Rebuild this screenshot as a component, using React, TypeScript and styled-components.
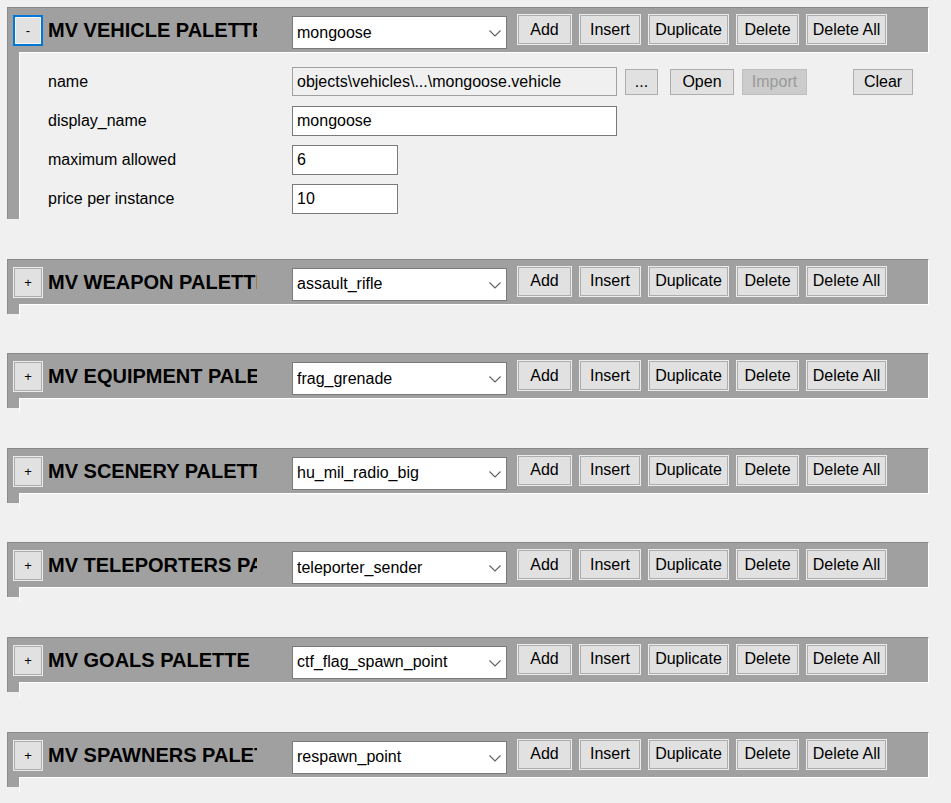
import React from "react";
import styled, { createGlobalStyle } from "styled-components";

const Global = createGlobalStyle`
  html, body { margin: 0; padding: 0; background: #f0f0f0; }
  body { font-family: "Liberation Sans", Arial, sans-serif; font-size: 16px; color: #000; }
  * { box-sizing: border-box; }
`;

const Page = styled.div`
  width: 951px;
  height: 803px;
  overflow: hidden;
  padding: 7px 0 0 7px;
  display: flex;
  flex-direction: column;
  gap: 39.6px;
  background: #f0f0f0;
`;

const Section = styled.div`
  width: 922px;
  display: flex;
  flex-direction: column;
`;

const Header = styled.div`
  height: 45px;
  background: #a0a0a0;
  border-top: 1px solid #888888;
  border-left: 1px solid #8c8c8c;
  border-right: 1px solid #ffffff;
  display: flex;
  align-items: flex-start;
  padding-left: 5px;
`;

const Toggle = styled.div<{ $focused?: boolean }>`
  width: 30px;
  height: 31px;
  margin-top: 7px;
  flex: none;
  background: #e1e1e1;
  border: ${(p) => (p.$focused ? "2px solid #0078d7" : "1px solid #ececec")};
  box-shadow: ${(p) => (p.$focused ? "inset 0 0 0 1px #f4f4f4" : "inset 0 0 0 1px #adadad")};
  display: flex;
  align-items: center;
  justify-content: center;
  font-size: 13px;
  line-height: 1;
  color: #000;
`;

const Title = styled.div`
  width: 209px;
  height: 44px;
  margin-left: 5px;
  flex: none;
  overflow: hidden;
  white-space: nowrap;
  font-weight: bold;
  font-size: 20px;
  line-height: 44px;
  color: #000;
`;

const Combo = styled.div`
  width: 215px;
  height: 33px;
  margin-top: 8px;
  margin-left: 35px;
  flex: none;
  background: #ffffff;
  border: 1px solid #7a7a7a;
  display: flex;
  align-items: center;
  padding: 0 5px 0 4px;
  font-size: 16px;
`;

const ComboText = styled.span`
  flex: 1;
  white-space: nowrap;
  overflow: hidden;
`;

const Chevron = styled.svg`
  width: 12px;
  height: 7px;
  flex: none;
  margin-top: 2px;
`;

const HeaderButtons = styled.div`
  display: flex;
  gap: 7px;
  margin-left: 10px;
  margin-top: 6px;
`;

const HeaderButton = styled.div<{ $w: number }>`
  width: ${(p) => p.$w}px;
  height: 31px;
  background: #e1e1e1;
  border: 1px solid #ececec;
  box-shadow: inset 0 0 0 1px #adadad;
  display: flex;
  align-items: center;
  justify-content: center;
  font-size: 16px;
  white-space: nowrap;
`;

const Body = styled.div<{ $h: number }>`
  display: flex;
  height: ${(p) => p.$h}px;
`;

const Strip = styled.div`
  width: 12px;
  flex: none;
  background: #a0a0a0;
  border-left: 1px solid #8c8c8c;
`;

const Content = styled.div`
  flex: 1;
  background: #f0f0f0;
  border-top: 1px solid #ffffff;
  border-left: 1px solid #ffffff;
  padding: 14px 0 0 27px;
  display: flex;
  flex-direction: column;
  gap: 10px;
`;

const Row = styled.div`
  display: flex;
  align-items: center;
  height: 29px;
`;

const Label = styled.div`
  width: 245px;
  flex: none;
  font-size: 16px;
  white-space: nowrap;
  padding-left: 1px;
`;

const Field = styled.div<{ $w: number; $readOnly?: boolean }>`
  width: ${(p) => p.$w}px;
  height: ${(p) => (p.$readOnly ? 29 : 30)}px;
  flex: none;
  background: ${(p) => (p.$readOnly ? "#f0f0f0" : "#ffffff")};
  border: 1px solid ${(p) => (p.$readOnly ? "#a0a0a0" : "#7a7a7a")};
  padding-left: 4px;
  display: flex;
  align-items: center;
  font-size: 16px;
  white-space: nowrap;
  overflow: hidden;
`;

const RowButton = styled.div<{ $w: number; $ml: number; $disabled?: boolean }>`
  width: ${(p) => p.$w}px;
  height: 26px;
  margin-left: ${(p) => p.$ml}px;
  flex: none;
  background: ${(p) => (p.$disabled ? "#cccccc" : "#e1e1e1")};
  border: 1px solid ${(p) => (p.$disabled ? "#bfbfbf" : "#adadad")};
  color: ${(p) => (p.$disabled ? "#9a9a9a" : "#000")};
  display: flex;
  align-items: center;
  justify-content: center;
  font-size: 16px;
`;

const headerButtons: [string, number][] = [
  ["Add", 55],
  ["Insert", 62],
  ["Duplicate", 81],
  ["Delete", 63],
  ["Delete All", 81],
];

type Palette = { title: string; value: string; open?: boolean };

const palettes: Palette[] = [
  { title: "MV VEHICLE PALETTE", value: "mongoose", open: true },
  { title: "MV WEAPON PALETTE", value: "assault_rifle" },
  { title: "MV EQUIPMENT PALETTE", value: "frag_grenade" },
  { title: "MV SCENERY PALETTE", value: "hu_mil_radio_big" },
  { title: "MV TELEPORTERS PALETTE", value: "teleporter_sender" },
  { title: "MV GOALS PALETTE", value: "ctf_flag_spawn_point" },
  { title: "MV SPAWNERS PALETTE", value: "respawn_point" },
];

function PaletteHeader({ p }: { p: Palette }) {
  return (
    <Header>
      <Toggle $focused={p.open}>{p.open ? "-" : "+"}</Toggle>
      <Title>{p.title}</Title>
      <Combo>
        <ComboText>{p.value}</ComboText>
        <Chevron viewBox="0 0 12 7">
          <polyline points="0.5,0.5 6,6 11.5,0.5" fill="none" stroke="#606060" strokeWidth="1.1" />
        </Chevron>
      </Combo>
      <HeaderButtons>
        {headerButtons.map(([t, w]) => (
          <HeaderButton key={t} $w={w}>
            {t}
          </HeaderButton>
        ))}
      </HeaderButtons>
    </Header>
  );
}

export default function App() {
  return (
    <>
      <Global />
      <Page>
        {palettes.map((p) => (
          <Section key={p.title}>
            <PaletteHeader p={p} />
            {p.open ? (
              <Body $h={167}>
                <Strip />
                <Content>
                  <Row>
                    <Label>name</Label>
                    <Field $w={325} $readOnly>
                      objects\vehicles\...\mongoose.vehicle
                    </Field>
                    <RowButton $w={33} $ml={8}>...</RowButton>
                    <RowButton $w={64} $ml={12}>Open</RowButton>
                    <RowButton $w={65} $ml={8} $disabled>Import</RowButton>
                    <RowButton $w={60} $ml={46}>Clear</RowButton>
                  </Row>
                  <Row>
                    <Label>display_name</Label>
                    <Field $w={325}>mongoose</Field>
                  </Row>
                  <Row>
                    <Label>maximum allowed</Label>
                    <Field $w={106}>6</Field>
                  </Row>
                  <Row>
                    <Label>price per instance</Label>
                    <Field $w={106}>10</Field>
                  </Row>
                </Content>
              </Body>
            ) : (
              <Body $h={10}>
                <Strip />
                <Content />
              </Body>
            )}
          </Section>
        ))}
      </Page>
    </>
  );
}
